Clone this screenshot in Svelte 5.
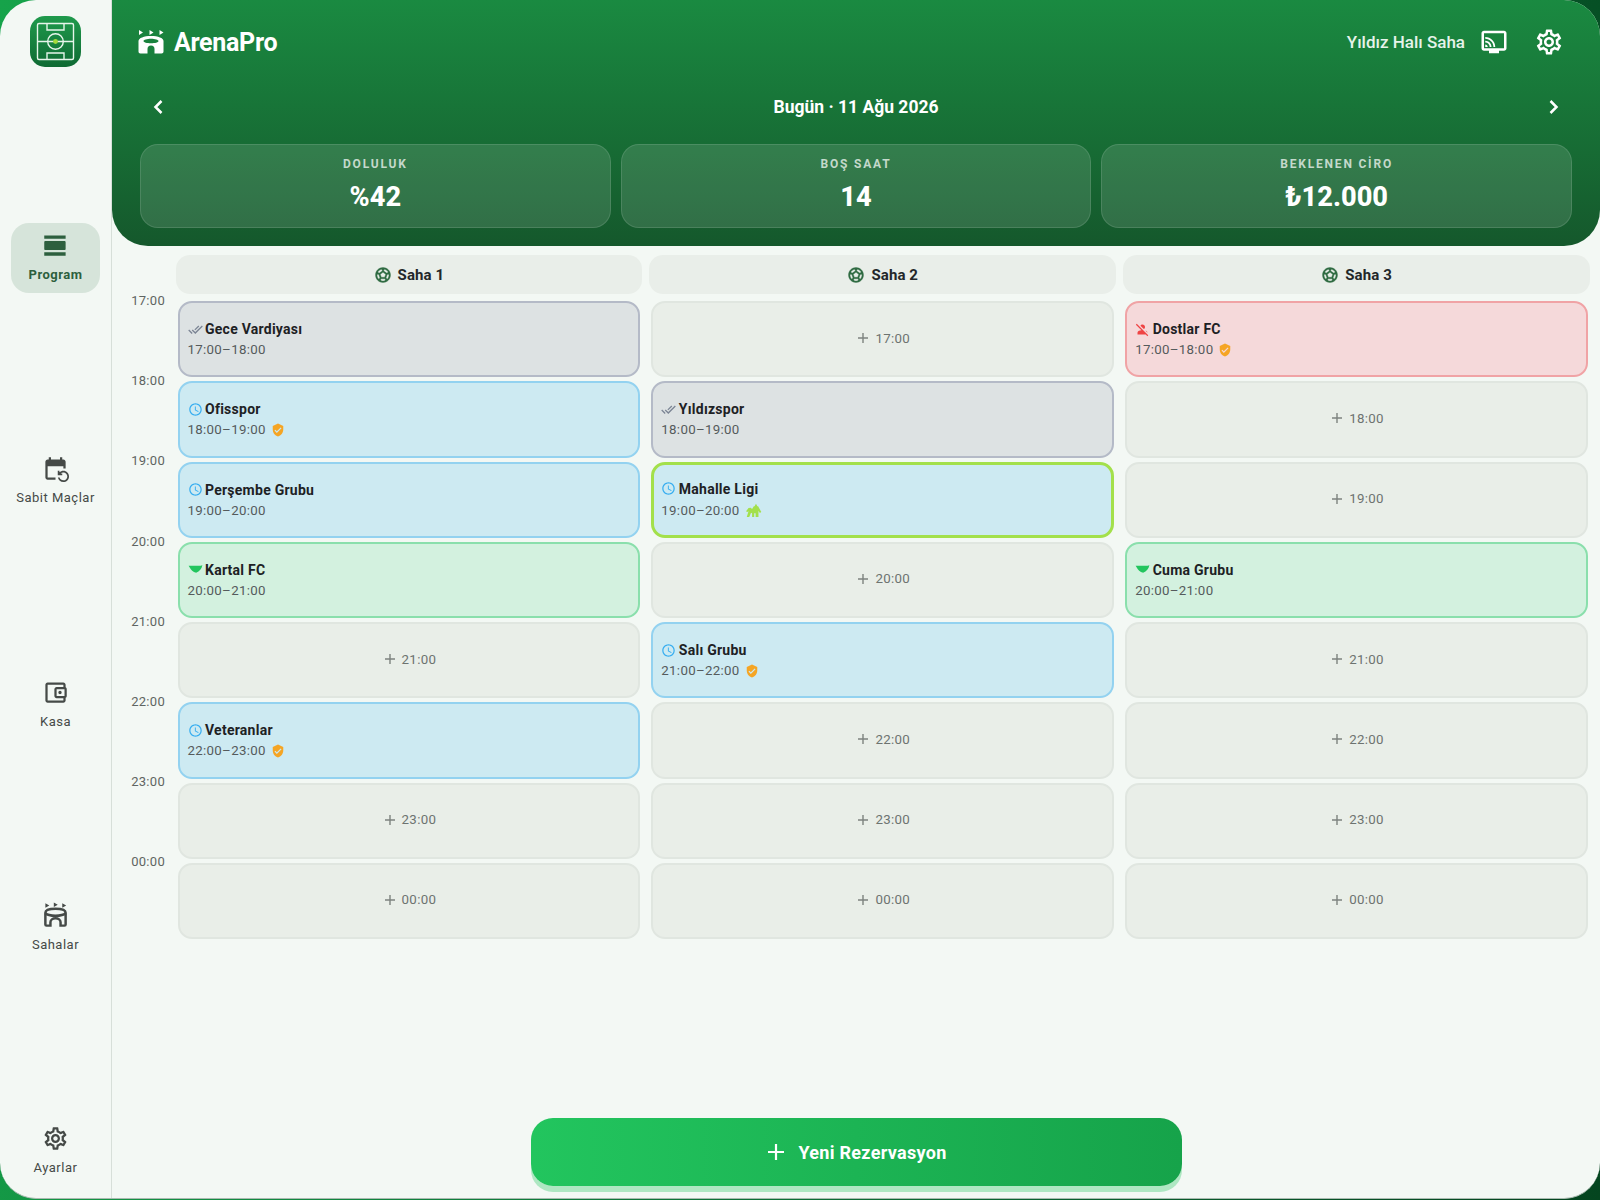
<script>
  const pitches = ['Saha 1', 'Saha 2', 'Saha 3'];
  const hours = ['17:00', '18:00', '19:00', '20:00', '21:00', '22:00', '23:00', '00:00'];
  const nav = [
    { icon: 'day', label: 'Program', active: true },
    { icon: 'repeat', label: 'Sabit Maçlar' },
    { icon: 'wallet', label: 'Kasa' },
    { icon: 'stadium', label: 'Sahalar' },
    { icon: 'gear', label: 'Ayarlar' }
  ];
  const stats = [
    ['DOLULUK', '%42'],
    ['BOŞ SAAT', '14'],
    ['BEKLENEN CİRO', '₺12.000']
  ];
  // rows per pitch, null = free slot
  const grid = [
    [
      { n: 'Gece Vardiyası', k: 'done' },
      { n: 'Ofisspor', k: 'wait', shield: true },
      { n: 'Perşembe Grubu', k: 'wait' },
      { n: 'Kartal FC', k: 'paid' },
      null,
      { n: 'Veteranlar', k: 'wait', shield: true },
      null,
      null
    ],
    [
      null,
      { n: 'Yıldızspor', k: 'done' },
      { n: 'Mahalle Ligi', k: 'wait', league: true },
      null,
      { n: 'Salı Grubu', k: 'wait', shield: true },
      null,
      null,
      null
    ],
    [
      { n: 'Dostlar FC', k: 'off', shield: true },
      null,
      null,
      { n: 'Cuma Grubu', k: 'paid' },
      null,
      null,
      null,
      null
    ]
  ];
  const range = (i) => `${hours[i]}–${hours[i + 1] ?? '01:00'}`;

  const P = {
    day: 'M2 21h19v-3H2v3zM20 8H3c-.55 0-1 .45-1 1v6c0 .55.45 1 1 1h17c.55 0 1-.45 1-1V9c0-.55-.45-1-1-1zM2 3v3h19V3H2z',
    repeat: 'M21 12V6c0-1.1-.9-2-2-2h-1V2h-2v2H8V2H6v2H5c-1.1 0-2 .9-2 2v14c0 1.1.9 2 2 2h7v-2H5V10h14v2h2zm-5.36 8c.43 1.45 1.77 2.5 3.36 2.5 1.93 0 3.5-1.57 3.5-3.5s-1.57-3.5-3.5-3.5c-.95 0-1.82.38-2.45 1H18V18h-4v-4h1.5v1.43c.9-.88 2.14-1.43 3.5-1.43 2.76 0 5 2.24 5 5s-2.24 5-5 5c-2.42 0-4.44-1.72-4.9-4h1.54z',
    wallet: 'M21 7.28V5c0-1.1-.9-2-2-2H5c-1.11 0-2 .9-2 2v14c0 1.1.89 2 2 2h14c1.1 0 2-.9 2-2v-2.28c.59-.35 1-.98 1-1.72V9c0-.74-.41-1.38-1-1.72zM20 9v6h-7V9h7zM5 19V5h14v2h-6c-1.1 0-2 .9-2 2v6c0 1.1.9 2 2 2h6v2H5zM16 13.5a1.5 1.5 0 1 0 0-3 1.5 1.5 0 0 0 0 3z',
    gear: 'M19.43 12.98c.04-.32.07-.64.07-.98 0-.34-.03-.66-.07-.98l2.11-1.65c.19-.15.24-.42.12-.64l-2-3.46c-.09-.16-.26-.25-.44-.25-.06 0-.12.01-.17.03l-2.49 1c-.52-.4-1.08-.73-1.69-.98l-.38-2.65C14.46 2.18 14.25 2 14 2h-4c-.25 0-.46.18-.49.42l-.38 2.65c-.61.25-1.17.59-1.69.98l-2.49-1c-.06-.02-.12-.03-.18-.03-.17 0-.34.09-.43.25l-2 3.46c-.13.22-.07.49.12.64l2.11 1.65c-.04.32-.07.65-.07.98 0 .33.03.66.07.98l-2.11 1.65c-.19.15-.24.42-.12.64l2 3.46c.09.16.26.25.44.25.06 0 .12-.01.17-.03l2.49-1c.52.4 1.08.73 1.69.98l.38 2.65c.03.24.24.42.49.42h4c.25 0 .46-.18.49-.42l.38-2.65c.61-.25 1.17-.59 1.69-.98l2.49 1c.06.02.12.03.18.03.17 0 .34-.09.43-.25l2-3.46c.12-.22.07-.49-.12-.64l-2.11-1.65zm-1.98-1.71c.04.31.05.52.05.73 0 .21-.02.43-.05.73l-.14 1.13.89.7 1.08.84-.7 1.21-1.27-.51-1.04-.42-.9.68c-.43.32-.84.56-1.25.73l-1.06.43-.16 1.13-.2 1.35h-1.4l-.19-1.35-.16-1.13-1.06-.43c-.43-.18-.83-.41-1.23-.71l-.91-.7-1.06.43-1.27.51-.7-1.21 1.08-.84.89-.7-.14-1.13c-.03-.31-.05-.54-.05-.74s.02-.43.05-.73l.14-1.13-.89-.7-1.08-.84.7-1.21 1.27.51 1.04.42.9-.68c.43-.32.84-.56 1.25-.73l1.06-.43.16-1.13.2-1.35h1.39l.19 1.35.16 1.13 1.06.43c.43.18.83.41 1.23.71l.91.7 1.06-.43 1.27-.51.7 1.21-1.07.85-.89.7.14 1.13zM12 8c-2.21 0-4 1.79-4 4s1.79 4 4 4 4-1.79 4-4-1.79-4-4-4zm0 6c-1.1 0-2-.9-2-2s.9-2 2-2 2 .9 2 2-.9 2-2 2z',
    tv: 'M20 3H4c-1.1 0-2 .9-2 2v12c0 1.1.9 2 2 2h4v2h8v-2h4c1.1 0 2-.9 2-2V5c0-1.1-.9-2-2-2zm0 14H4V5h16v12zM5 14v2h2c0-1.11-.89-2-2-2zM5 11v1.43c1.97 0 3.57 1.6 3.57 3.57H10c0-2.76-2.24-5-5-5zM5 8v1.45c3.61 0 6.55 2.93 6.55 6.55H13c0-4.42-3.59-8-8-8z',
    ball: 'M12 2C6.48 2 2 6.48 2 12s4.48 10 10 10 10-4.48 10-10S17.52 2 12 2zm1 3.3l1.35-.95c1.82.56 3.37 1.76 4.38 3.34l-.39 1.34-1.35.46L13 6.7V5.3zm-3.35-.95L11 5.3v1.4L7.01 9.49l-1.35-.46-.39-1.34c1.01-1.57 2.56-2.77 4.38-3.34zM7.08 17.11l-1.14.1C4.73 15.81 4 13.99 4 12c0-.12.01-.23.02-.35l1-.73 1.38.48 1.46 4.34-.78 1.37zm7.42 2.48c-.79.26-1.63.41-2.5.41s-1.71-.15-2.5-.41l-.69-1.49.64-1.1h5.11l.64 1.11-.7 1.48zM14.27 15H9.73l-1.35-4.02L12 8.44l3.63 2.54L14.27 15zm3.79 2.21l-1.14-.1-.79-1.37 1.46-4.34 1.39-.47 1 .73c.01.11.02.22.02.34 0 1.99-.73 3.81-1.94 5.21z',
    wait: 'M11.99 2C6.47 2 2 6.48 2 12s4.47 10 9.99 10C17.52 22 22 17.52 22 12S17.52 2 11.99 2zM12 20c-4.42 0-8-3.58-8-8s3.58-8 8-8 8 3.58 8 8-3.58 8-8 8zm.5-13H11v6l5.25 3.15.75-1.23-4.5-2.67z',
    done: 'M18 7l-1.41-1.41-6.34 6.34 1.41 1.41L18 7zm4.24-1.41L11.66 16.17 7.48 12l-1.41 1.41L11.66 19l12-12-1.42-1.41zM.41 13.41L6 19l1.41-1.41L1.83 12 .41 13.41z',
    off: 'M8.65 5.82C9.36 4.72 10.6 4 12 4c2.21 0 4 1.79 4 4 0 1.4-.72 2.64-1.82 3.35L8.65 5.82zM20 17.17c-.02-1.1-.63-2.11-1.61-2.62-.54-.28-1.13-.54-1.77-.76L20 17.17zM21.19 21.19 2.81 2.81 1.39 4.22l8.89 8.89c-1.81.23-3.39.79-4.67 1.45C4.61 15.07 4 16.1 4 17.22V20h13.17l2.61 2.61 1.41-1.42z',
    paid: 'M1 6h19l3-1c-1 5.500-4.500 9.500-10 12C8 15.500 4.500 12.500 3 9z',
    shield: 'M12 1L3 5v6c0 5.55 3.84 10.74 9 12 5.16-1.26 9-6.45 9-12V5l-9-4zm-2 16l-4-4 1.41-1.41L10 14.17l6.59-6.59L18 9l-8 8z',
    league: 'M15.500 2.500l2 3.500h1L23 14l-2 1.500-2-3V21h-4v-5h-2v5h-3v-5l-1.500-1L6 21H2.500L5 13l-2 1-1.500-1L5 8.500 8 8l2 2 2.500-4h1z'
  };
</script>

<div class="shell">
  <div class="app">
    <aside class="rail">
      <div class="logo">
        <svg viewBox="0 0 51 51" width="51" height="51" fill="none" stroke="#e6f5ea" stroke-width="1.400">
          <rect x="7.500" y="7.500" width="36" height="36" rx="1.500" />
          <path d="M7.500 25.500h36M17 7.500v6.500h17V7.500M17 43.500V37h17v6.500" />
          <circle cx="25.500" cy="25.500" r="7.800" />
          <circle cx="25.500" cy="25.500" r="2.400" fill="#a3d93a" stroke="none" />
        </svg>
      </div>
      <nav class="items">
        {#each nav as item (item.label)}
          <button class="item" class:active={item.active}>
            {#if item.icon === 'stadium'}
              <svg viewBox="0 0 24 24" width="27" height="27" fill="none" stroke="currentColor" stroke-width="2.200">
                <path d="M3 1v4l3.500-2zM10.500 .500v4l3.500-2zM18 1v4l3.500-2z" fill="currentColor" stroke="none" />
                <path d="M3 9.500c0-2.300 4-3.500 9-3.500s9 1.200 9 3.500V20q0 1-1 1h-3.500v-3a4.500 3.500 0 0 0-9 0v3H4q-1 0-1-1z" />
                <path d="M3 10c1.500 1.400 4.500 2.200 9 2.200s7.500-.8 9-2.200" />
              </svg>
            {:else}
              <svg viewBox="0 0 24 24" width="27" height="27" fill="currentColor"><path d={P[item.icon]} /></svg>
            {/if}
            <span>{item.label}</span>
          </button>
        {/each}
      </nav>
    </aside>

    <main class="main">
      <header class="hero">
        <div class="top">
          <div class="brand">
            <svg viewBox="0 0 26 24" width="26" height="24" fill="#fff">
              <path d="M1 0v5l4-2.500zM11.500 0v5l4-2.500zM21.500 0v5l4-2.500z" />
              <path fill-rule="evenodd" d="M.500 11C.500 8 6 6 13 6s12.500 2 12.500 5v10.500c0 1.300-.7 2-2 2h-7V19a3.500 3.500 0 0 0-7 0v4.500h-7c-1.300 0-2-.7-2-2zM13 8.700c-4.100 0-7.500 1-7.500 2.300s3.400 2.300 7.500 2.300 7.500-1 7.500-2.300-3.400-2.300-7.500-2.300z" />
            </svg>
            <strong>ArenaPro</strong>
          </div>
          <div class="venue">
            <span>Yıldız Halı Saha</span>
            <svg viewBox="0 0 24 24" width="30" height="30" fill="#fff"><path d={P.tv} /></svg>
            <svg viewBox="0 0 24 24" width="30" height="30" fill="#fff"><path d={P.gear} /></svg>
          </div>
        </div>
        <div class="date">
          <svg viewBox="0 0 12 16" width="12" height="16" fill="none" stroke="#fff" stroke-width="2.500"><path d="M9.500 2 3.500 8l6 6" /></svg>
          <span>Bugün · 11 Ağu 2026</span>
          <svg viewBox="0 0 12 16" width="12" height="16" fill="none" stroke="#fff" stroke-width="2.500"><path d="M2.500 2l6 6-6 6" /></svg>
        </div>
        <div class="stats">
          {#each stats as [label, value] (label)}
            <div class="stat">
              <div class="lbl">{label}</div>
              <div class="val">{value}</div>
            </div>
          {/each}
        </div>
      </header>

      <section class="board">
        <div class="times">
          {#each hours as h (h)}<div class="tm">{h}</div>{/each}
        </div>
        {#each pitches as name, c (name)}
          <div class="col">
            <div class="pitch">
              <svg viewBox="0 0 24 24" width="18" height="18" fill="#2f6b42"><path d={P.ball} stroke="#2f6b42" stroke-width="0.500" /></svg>
              <span>{name}</span>
            </div>
            {#each grid[c] as slot, i (i)}
              <div class="cell">
                {#if slot}
                  <div class="card {slot.k}" class:hl={slot.league}>
                    <div class="nm">
                      <svg class="st" viewBox="0 0 24 24" width="15" height="15" fill="currentColor"><path d={P[slot.k]} /></svg>
                      <span>{slot.n}</span>
                    </div>
                    <div class="rng">
                      <span>{range(i)}</span>
                      {#if slot.shield}<svg viewBox="0 0 24 24" width="14" height="14" fill="#f5a524"><path d={P.shield} /></svg>{/if}
                      {#if slot.league}<svg viewBox="0 0 24 24" width="17" height="17" fill="#a3e04b"><path d={P.league} /></svg>{/if}
                    </div>
                  </div>
                {:else}
                  <div class="free">
                    <svg viewBox="0 0 12 12" width="12" height="12" stroke="#7d837f" stroke-width="1.400"><path d="M6 1v10M1 6h10" /></svg>
                    <span>{hours[i]}</span>
                  </div>
                {/if}
              </div>
            {/each}
          </div>
        {/each}
      </section>

      <div class="foot">
        <button class="new">
          <svg viewBox="0 0 18 18" width="18" height="18" stroke="#fff" stroke-width="2.200"><path d="M9 1v16M1 9h16" /></svg>
          <span>Yeni Rezervasyon</span>
        </button>
      </div>
    </main>
  </div>
</div>

<style>
  :global(body) { margin: 0; font-family: Roboto, "Liberation Sans", sans-serif; }
  button { font: inherit; border: none; background: none; cursor: pointer; }
  .shell { width: 1600px; height: 1200px; background: linear-gradient(100deg, #16a34a 0%, #0b6a33 60%, #04451f 100%); overflow: hidden; }
  .app { height: 1199px; display: flex; background: #f3f8f4; border-radius: 36px; overflow: hidden; border-bottom: 1px solid #a9bab0; box-sizing: border-box; }

  .rail { width: 112px; flex: none; box-sizing: border-box; border-right: 1px solid #d7dfd9; display: flex; flex-direction: column; align-items: center; padding: 16px 0 12px; }
  .logo { width: 51px; height: 51px; border-radius: 15px; background: linear-gradient(180deg, #1f9a4c, #0f6a33); flex: none; }
  .logo svg { display: block; }
  .items { flex: 1; display: flex; flex-direction: column; justify-content: space-between; margin-top: 156px; align-self: stretch; align-items: center; }
  .item { width: 89px; height: 70px; border-radius: 18px; display: flex; flex-direction: column; align-items: center; justify-content: center; gap: 8px; color: #454a47; font-size: 13px; letter-spacing: 0.5px; padding: 0 0 2px; white-space: nowrap; }
  .item.active { background: #d6e4da; color: #2d5f3e; font-weight: 700; }

  .main { flex: 1; min-width: 0; display: flex; flex-direction: column; }
  .hero { height: 246px; flex: none; box-sizing: border-box; background: linear-gradient(180deg, #1a8a41, #15582c); border-radius: 0 0 36px 36px; color: #fff; padding: 0 28px; }
  .top { height: 84px; display: flex; align-items: center; justify-content: space-between; }
  .brand { display: flex; align-items: center; gap: 10px; margin-left: -2px; }
  .brand strong { font-size: 25px; font-weight: 700; letter-spacing: -0.3px; }
  .venue { display: flex; align-items: center; font-size: 17px; font-weight: 500; color: #e6f3ea; gap: 14px; margin-right: 8px; }
  .venue svg + svg { margin-left: 11px; }
  .date { display: flex; align-items: center; justify-content: space-between; font-size: 17.500px; font-weight: 700; height: 46px; margin: 0 12px; }
  .stats { display: grid; grid-template-columns: repeat(3, 1fr); gap: 10px; margin-top: 14px; }
  .stat { height: 84px; box-sizing: border-box; border-radius: 18px; background: rgba(255, 255, 255, 0.12); border: 1px solid rgba(255, 255, 255, 0.12); text-align: center; padding-top: 12px; }
  .lbl { font-size: 12px; font-weight: 700; letter-spacing: 1.800px; color: rgba(255, 255, 255, 0.72); }
  .val { font-size: 27.200px; font-weight: 800; line-height: 36px; margin-top: 8px; }

  .board { flex: 1; display: grid; grid-template-columns: 56.500px repeat(3, 1fr); column-gap: 7px; padding: 9px 10px 0 0; align-content: start; }
  .times { padding: 38px 3.500px 0 0; }
  .tm { height: 80.200px; font-size: 13px; color: #5f6562; text-align: right; letter-spacing: 0.3px; line-height: 16px; }
  .pitch { height: 39px; border-radius: 14px; background: #e9eee9; display: flex; align-items: center; justify-content: center; gap: 6px; font-size: 15px; font-weight: 700; letter-spacing: 0.1px; color: #23272a; margin-bottom: 5px; }
  .cell { height: 80.250px; box-sizing: border-box; padding: 2px; }
  .card, .free { height: 100%; box-sizing: border-box; border-radius: 14px; }
  .card { border: 2px solid; padding: 0 8px; display: flex; flex-direction: column; justify-content: center; gap: 5px; }
  .nm { display: flex; align-items: center; gap: 2.500px; font-size: 14px; font-weight: 700; letter-spacing: 0.25px; color: #1d2124; }
  .rng { display: flex; align-items: center; gap: 5px; font-size: 13.300px; color: #555b5c; letter-spacing: 0.3px; }
  .done { background: #dde2e3; border-color: #b4bac7; }
  .done .st { color: #7b8494; }
  .wait { background: #cdeaf2; border-color: #93d2f0; }
  .wait .st { color: #38aef0; }
  .paid { background: #d3f1df; border-color: #8adfac; }
  .paid .st { color: #22c55e; }
  .off { background: #f5d9da; border-color: #f0a3a5; }
  .off .st { color: #ef4444; }
  .card.hl { border: 3px solid #a3e04b; padding: 0 7px; }
  .free { background: #e9eee8; border: 2px solid #e0e6e0; display: flex; align-items: center; justify-content: center; gap: 6px; font-size: 13.300px; color: #6d7370; letter-spacing: 0.3px; padding: 0 0 2px 2px; }

  .foot { display: flex; justify-content: center; padding-bottom: 12px; }
  .new { width: 651px; height: 68px; border-radius: 22px; background: linear-gradient(90deg, #22c55e, #16a34a); box-shadow: 0 6px 0 #aee7c2; color: #fff; font-size: 18px; font-weight: 700; letter-spacing: 0.3px; display: flex; align-items: center; justify-content: center; gap: 13px; padding: 0 0 0 2px; }
</style>
